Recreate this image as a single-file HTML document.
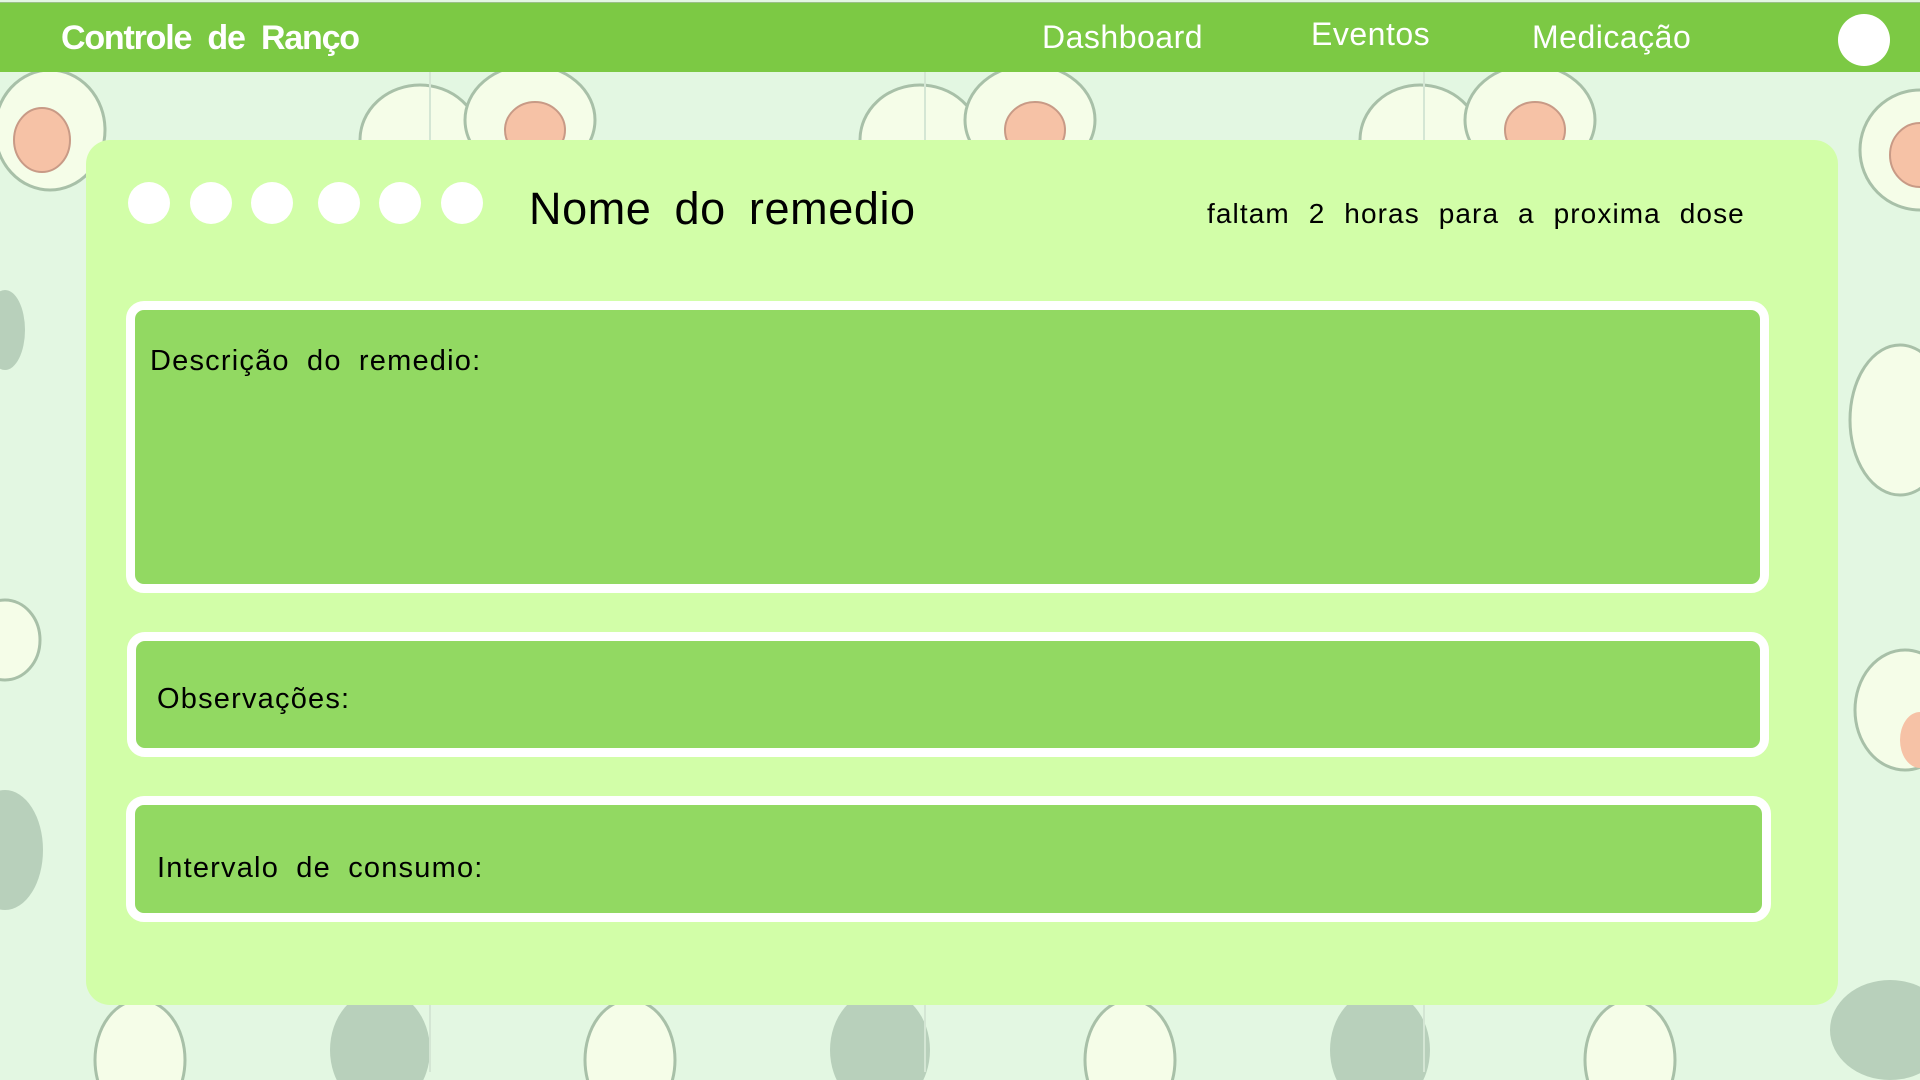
<!DOCTYPE html>
<html><head><meta charset="utf-8"><style>
*{margin:0;padding:0;box-sizing:border-box}
html,body{width:1920px;height:1080px;overflow:hidden}
body{background:#e3f7e2;position:relative;font-family:"Liberation Sans",sans-serif}
.abs{position:absolute}
.nav{position:absolute;left:0;top:2px;width:1920px;height:70px;background:#7cc944;border-top:1px solid #9bbf88}
.nav .t{position:absolute;left:61px;top:16px;font-size:34px;font-weight:bold;color:#fff;word-spacing:8px;letter-spacing:-1.2px}
.nav a{position:absolute;color:#fff;font-size:32px;text-decoration:none;letter-spacing:0.5px}
.card{position:absolute;left:86px;top:140px;width:1752px;height:865px;background:#d2fea8;border-radius:24px}
.dot{position:absolute;width:42px;height:42px;border-radius:50%;background:#fff;top:182px}
.box{position:absolute;background:#92d962;border:9px solid #fff;border-radius:18px;color:#000;font-size:29px;word-spacing:8px;letter-spacing:1.2px}
.box span{position:absolute;white-space:nowrap}
.strip{position:absolute;top:72px;width:2px;height:1008px;background:#d4e6d4}
</style></head><body>
<svg class="abs" style="left:0;top:0;overflow:hidden" width="1920" height="1080">
<g>
<ellipse cx="50" cy="130" rx="55" ry="60" fill="#f5fde8" stroke="#a8c0a8" stroke-width="3"/>
<ellipse cx="42" cy="140" rx="28" ry="32" fill="#f6c2a6" stroke="#c89a86" stroke-width="2"/>
<ellipse cx="420" cy="140" rx="60" ry="55" fill="#f5fde8" stroke="#a8c0a8" stroke-width="3"/>
<ellipse cx="530" cy="120" rx="65" ry="55" fill="#f5fde8" stroke="#a8c0a8" stroke-width="3"/>
<ellipse cx="535" cy="130" rx="30" ry="28" fill="#f6c2a6" stroke="#c89a86" stroke-width="2"/>
<ellipse cx="920" cy="140" rx="60" ry="55" fill="#f5fde8" stroke="#a8c0a8" stroke-width="3"/>
<ellipse cx="1030" cy="120" rx="65" ry="55" fill="#f5fde8" stroke="#a8c0a8" stroke-width="3"/>
<ellipse cx="1035" cy="130" rx="30" ry="28" fill="#f6c2a6" stroke="#c89a86" stroke-width="2"/>
<ellipse cx="1420" cy="140" rx="60" ry="55" fill="#f5fde8" stroke="#a8c0a8" stroke-width="3"/>
<ellipse cx="1530" cy="120" rx="65" ry="55" fill="#f5fde8" stroke="#a8c0a8" stroke-width="3"/>
<ellipse cx="1535" cy="130" rx="30" ry="28" fill="#f6c2a6" stroke="#c89a86" stroke-width="2"/>
<ellipse cx="1920" cy="150" rx="60" ry="60" fill="#f5fde8" stroke="#a8c0a8" stroke-width="3"/>
<ellipse cx="1920" cy="155" rx="30" ry="32" fill="#f6c2a6" stroke="#c89a86" stroke-width="2"/>
<ellipse cx="1900" cy="420" rx="50" ry="75" fill="#f5fde8" stroke="#a8c0a8" stroke-width="3"/>
<ellipse cx="1905" cy="710" rx="50" ry="60" fill="#f5fde8" stroke="#a8c0a8" stroke-width="3"/>
<ellipse cx="1920" cy="740" rx="20" ry="28" fill="#f6c2a6"/>
<ellipse cx="1890" cy="1030" rx="60" ry="50" fill="#b8d0bb"/>
<ellipse cx="5" cy="330" rx="20" ry="40" fill="#b8d0bb"/>
<ellipse cx="5" cy="640" rx="35" ry="40" fill="#f5fde8" stroke="#a8c0a8" stroke-width="3"/>
<ellipse cx="5" cy="850" rx="38" ry="60" fill="#b8d0bb"/>
<ellipse cx="140" cy="1060" rx="45" ry="60" fill="#f5fde8" stroke="#a8c0a8" stroke-width="3"/>
<ellipse cx="380" cy="1050" rx="50" ry="60" fill="#b8d0bb"/>
<ellipse cx="630" cy="1060" rx="45" ry="60" fill="#f5fde8" stroke="#a8c0a8" stroke-width="3"/>
<ellipse cx="880" cy="1050" rx="50" ry="60" fill="#b8d0bb"/>
<ellipse cx="1130" cy="1060" rx="45" ry="60" fill="#f5fde8" stroke="#a8c0a8" stroke-width="3"/>
<ellipse cx="1380" cy="1050" rx="50" ry="60" fill="#b8d0bb"/>
<ellipse cx="1630" cy="1060" rx="45" ry="60" fill="#f5fde8" stroke="#a8c0a8" stroke-width="3"/>
</g>
</svg>
<div class="strip" style="left:429px;height:1000px"></div>
<div class="strip" style="left:924px;height:1000px"></div>
<div class="strip" style="left:1423px;height:1000px"></div>
<div class="nav">
<div class="t">Controle de Ranço</div>
<a style="left:1042px;top:16px">Dashboard</a>
<a style="left:1311px;top:13px">Eventos</a>
<a style="left:1532px;top:16px">Medicação</a>
<div class="abs" style="left:1838px;top:11px;width:52px;height:52px;border-radius:50%;background:#fff"></div>
</div>
<div class="card"></div>
<div class="dot" style="left:128px"></div>
<div class="dot" style="left:190px"></div>
<div class="dot" style="left:251px"></div>
<div class="dot" style="left:318px"></div>
<div class="dot" style="left:379px"></div>
<div class="dot" style="left:441px"></div>
<div class="abs" style="left:529px;top:183px;font-size:45px;word-spacing:10px;letter-spacing:0.6px;color:#000;white-space:nowrap">Nome do remedio</div>
<div class="abs" style="left:1207px;top:198px;font-size:28px;word-spacing:10px;letter-spacing:1.1px;color:#000;white-space:nowrap">faltam 2 horas para a proxima dose</div>
<div class="box" style="left:126px;top:301px;width:1643px;height:292px"><span style="left:15px;top:35px">Descrição do remedio:</span></div>
<div class="box" style="left:127px;top:632px;width:1642px;height:125px"><span style="left:21px;top:42px">Observações:</span></div>
<div class="box" style="left:126px;top:796px;width:1645px;height:126px"><span style="left:22px;top:47px">Intervalo de consumo:</span></div>
</body></html>
